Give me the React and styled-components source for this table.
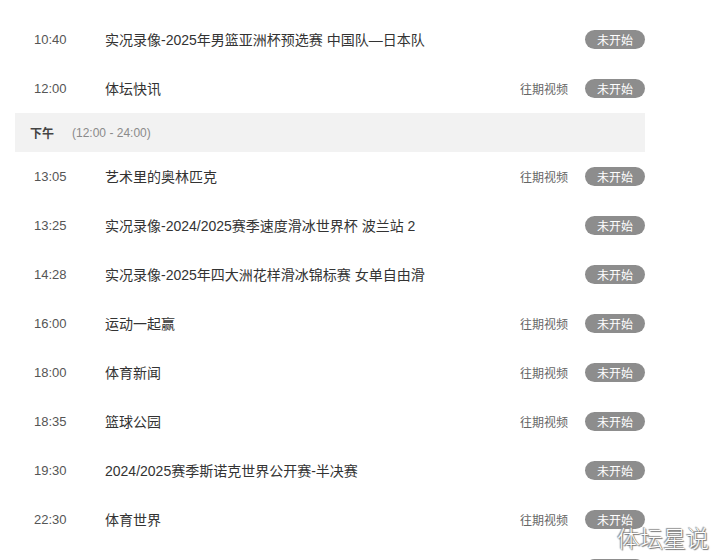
import React from "react";
import styled, { createGlobalStyle } from "styled-components";

const Global = createGlobalStyle`
  html, body { margin: 0; padding: 0; background: #ffffff; }
  body { font-family: "Liberation Sans", "Noto Sans CJK SC", sans-serif; overflow: hidden; }
`;

const Page = styled.div`
  position: relative;
  width: 719px;
  height: 560px;
  overflow: hidden;
  background: #fff;
`;

const List = styled.div`
  width: 630px;
  margin-left: 15px;
  padding-top: 15px;
  display: flex;
  flex-direction: column;
`;

const Row = styled.div`
  height: 49px;
  display: flex;
  align-items: center;
`;

const Time = styled.span`
  width: 71px;
  padding-left: 19px;
  font-family: "Liberation Sans", sans-serif;
  font-size: 13px;
  line-height: 1;
  color: #555;
  flex-shrink: 0;
`;

const Title = styled.span`
  flex: 1;
  font-family: "Liberation Sans", "Noto Sans CJK SC", sans-serif;
  font-size: 14px;
  line-height: 1;
  color: #333;
  white-space: nowrap;
`;

const Replay = styled.span`
  font-family: "Noto Sans CJK SC", sans-serif;
  font-size: 12px;
  line-height: 1;
  color: #666;
  margin-right: 17px;
`;

const Badge = styled.span`
  width: 60px;
  height: 19px;
  border-radius: 10px;
  background: #8d8d8d;
  color: #fff;
  font-family: "Noto Sans CJK SC", sans-serif;
  font-size: 12px;
  display: flex;
  align-items: center;
  justify-content: center;
  flex-shrink: 0;
`;

const Band = styled.div`
  height: 39px;
  background: #f2f2f2;
  display: flex;
  align-items: center;
  padding-left: 15px;
  gap: 18px;
`;

const BandLabel = styled.span`
  font-family: "Noto Sans CJK SC", sans-serif;
  font-weight: 700;
  font-size: 12px;
  color: #444;
`;

const BandRange = styled.span`
  font-family: "Liberation Sans", sans-serif;
  font-size: 12px;
  color: #8a8a8a;
`;

const Watermark = styled.div`
  position: absolute;
  right: 10px;
  bottom: 6px;
  font-family: "Noto Sans CJK SC", sans-serif;
  font-weight: 300;
  font-size: 23px;
  color: #fff;
  text-shadow: 0 0 1px #555, 1px 1px 1px #777, -1px -1px 1px #999;
`;

const morning = [
  { time: "10:40", title: "实况录像-2025年男篮亚洲杯预选赛 中国队—日本队", replay: false },
  { time: "12:00", title: "体坛快讯", replay: true },
];

const afternoon = [
  { time: "13:05", title: "艺术里的奥林匹克", replay: true },
  { time: "13:25", title: "实况录像-2024/2025赛季速度滑冰世界杯 波兰站 2", replay: false },
  { time: "14:28", title: "实况录像-2025年四大洲花样滑冰锦标赛 女单自由滑", replay: false },
  { time: "16:00", title: "运动一起赢", replay: true },
  { time: "18:00", title: "体育新闻", replay: true },
  { time: "18:35", title: "篮球公园", replay: true },
  { time: "19:30", title: "2024/2025赛季斯诺克世界公开赛-半决赛", replay: false },
  { time: "22:30", title: "体育世界", replay: true },
  { time: "23:30", title: "实况录像-2025年四大洲花样滑冰锦标赛 冰舞自由舞", replay: false },
];

function Item({ time, title, replay }) {
  return (
    <Row>
      <Time>{time}</Time>
      <Title>{title}</Title>
      {replay && <Replay>往期视频</Replay>}
      <Badge>未开始</Badge>
    </Row>
  );
}

export default function App() {
  return (
    <Page>
      <Global />
      <List>
        {morning.map((r) => (
          <Item key={r.time} {...r} />
        ))}
        <Band>
          <BandLabel>下午</BandLabel>
          <BandRange>(12:00 - 24:00)</BandRange>
        </Band>
        {afternoon.map((r) => (
          <Item key={r.time} {...r} />
        ))}
      </List>
      <Watermark>体坛星说</Watermark>
    </Page>
  );
}
